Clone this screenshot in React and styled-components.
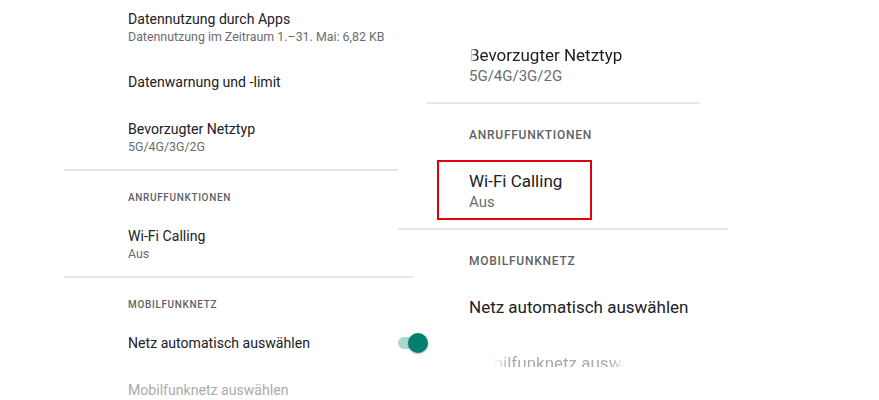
import React from "react";
import styled, { css, createGlobalStyle } from "styled-components";

const GlobalStyle = createGlobalStyle`
  html, body {
    margin: 0;
    padding: 0;
    background: #ffffff;
  }
  body {
    font-family: Roboto, "Noto Sans", "Liberation Sans", sans-serif;
    -webkit-font-smoothing: antialiased;
  }
`;

const palette = {
  title: `#202124`,
  sub: `#6a6d70`,
  header: `#5f6164`,
  disabled: `#ababab`,
  divider: `#e6e6e8`,
  teal: `#00806f`,
  tealTrack: `#aad7d1`,
  red: `#e2000f`
};

const Page = styled.div`
  position: relative;
  width: 879px;
  height: 400px;
  overflow: hidden;
`;

const Screen = styled.div`
  display: flex;
  flex-direction: column;
  width: ${p => p.width}px;
  margin-left: ${p => p.left}px;
  margin-top: ${p => p.top}px;
`;

const Row = styled.div`
  position: relative;
  display: flex;
  align-items: center;
  justify-content: space-between;
  padding: ${p => p.top}px 0 ${p => p.bottom}px ${p => p.indent}px;
`;

const Texts = styled.div`
  display: flex;
  flex-direction: column;
`;

const Title = styled.div`
  font-size: ${p => p.size}px;
  line-height: ${p => p.lh}px;
  color: ${p => (p.disabled ? palette.disabled : palette.title)};
  white-space: nowrap;
  ${p => p.cut && css`
    -webkit-mask-image: linear-gradient(to right, transparent 1px, #000 7px);
    mask-image: linear-gradient(to right, transparent 1px, #000 7px);
  `}
`;

const Sub = styled.div`
  font-size: ${p => p.size}px;
  line-height: ${p => p.lh}px;
  color: ${palette.sub};
  white-space: nowrap;
`;

const Header = styled.div`
  padding: ${p => p.top}px 0 ${p => p.bottom}px ${p => p.indent}px;
  font-size: ${p => p.size}px;
  line-height: ${p => p.lh}px;
  font-weight: 500;
  letter-spacing: ${p => p.spacing}px;
  color: ${palette.header};
  text-transform: uppercase;
`;

const Divider = styled.div`
  height: 2px;
  margin-left: ${p => p.from}px;
  width: ${p => p.width}px;
  background: ${palette.divider};
`;

const Switch = styled.div`
  position: relative;
  width: 30px;
  height: 20px;
  flex: none;
  &::before {
    content: "";
    position: absolute;
    left: 0;
    top: 4px;
    width: 26px;
    height: 12px;
    border-radius: 6px;
    background: ${palette.tealTrack};
  }
  &::after {
    content: "";
    position: absolute;
    right: 0;
    top: 0;
    width: 20px;
    height: 20px;
    border-radius: 50%;
    background: ${palette.teal};
    box-shadow: 0 1px 2px rgba(0, 0, 0, 0.3);
  }
`;

const Magnifier = styled.div`
  position: absolute;
  left: 398px;
  top: 27px;
  width: 330px;
  height: 340px;
  overflow: hidden;
`;

const Highlight = styled.div`
  position: absolute;
  left: 39px;
  top: 7px;
  width: 151px;
  height: 56px;
  border: 2px solid ${palette.red};
`;

// the magnified view fades out at its lower edge
const Faded = styled.div`
  -webkit-mask-image: linear-gradient(to right, transparent 96px, #000 112px, #000 212px, transparent 228px);
  mask-image: linear-gradient(to right, transparent 96px, #000 112px, #000 212px, transparent 228px);
`;

const small = { top: 13, bottom: 14, indent: 64, t: 14.1, tl: 20, s: 12.4, sl: 16, hTop: 20, hBottom: 8, h: 10, hl: 14, hs: 0.65 };
const big = { top: 16, bottom: 16, indent: 71, t: 17, tl: 24, s: 15, sl: 19, hTop: 23, hBottom: 9, h: 12, hl: 17, hs: 0.75 };

function Pref({ m, title, summary, disabled, cut, children }) {
  return (
    <Row top={m.top} bottom={m.bottom} indent={m.indent}>
      <Texts>
        <Title size={m.t} lh={m.tl} disabled={disabled} cut={cut}>{title}</Title>
        {summary && <Sub size={m.s} lh={m.sl}>{summary}</Sub>}
      </Texts>
      {children}
    </Row>
  );
}

function Section({ m, children }) {
  return (
    <Header top={m.hTop} bottom={m.hBottom} indent={m.indent} size={m.h} lh={m.hl} spacing={m.hs}>
      {children}
    </Header>
  );
}

export default function App() {
  return (
    <Page>
      <GlobalStyle />
      <Screen left={64} top={-4} width={364}>
        <Pref m={small} title="Datennutzung durch Apps" summary="Datennutzung im Zeitraum 1.–31. Mai: 6,82 KB" />
        <Pref m={small} title="Datenwarnung und -limit" />
        <Pref m={small} title="Bevorzugter Netztyp" summary="5G/4G/3G/2G" />
        <Divider from={0} width={334} />
        <Section m={small}>Anruffunktionen</Section>
        <Pref m={small} title="Wi-Fi Calling" summary="Aus" />
        <Divider from={0} width={349} />
        <Section m={small}>Mobilfunknetz</Section>
        <Pref m={small} title="Netz automatisch auswählen">
          <Switch />
        </Pref>
        <Pref m={small} title="Mobilfunknetz auswählen" disabled />
      </Screen>

      <Magnifier>
        <Screen left={0} top={0} width={330}>
          <Pref m={big} title="Bevorzugter Netztyp" summary="5G/4G/3G/2G" cut />
          <Divider from={29} width={273} />
          <Section m={big}>Anruffunktionen</Section>
          <Pref m={big} title="Wi-Fi Calling" summary="Aus">
            <Highlight />
          </Pref>
          <Divider from={0} width={330} />
          <Section m={big}>Mobilfunknetz</Section>
          <Pref m={big} title="Netz automatisch auswählen" />
          <Faded>
            <Pref m={big} title="Mobilfunknetz auswählen" disabled />
          </Faded>
        </Screen>
      </Magnifier>
    </Page>
  );
}
